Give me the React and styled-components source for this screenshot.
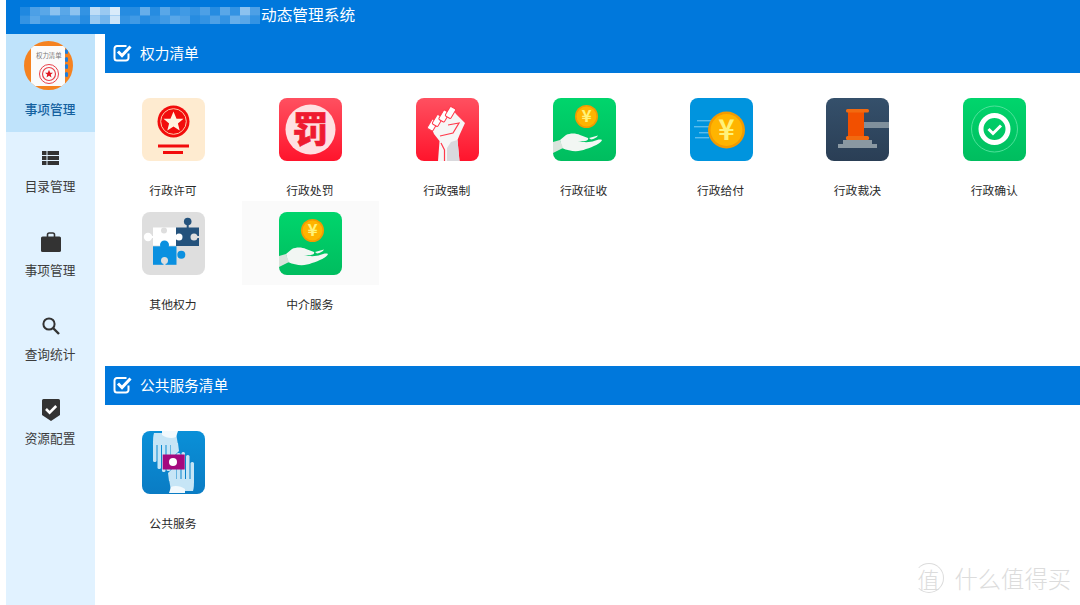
import React from "react";
import styled, { createGlobalStyle } from "styled-components";

const GlobalStyle = createGlobalStyle`
  html, body { margin: 0; padding: 0; height: 100%; background: #fff; overflow: hidden; }
  #root { height: 100%; }
  * { box-sizing: border-box; }
`;

const FONT = `"Noto Sans CJK SC", "Liberation Sans", sans-serif`;
const BLUE = "#0078dc";

const Page = styled.div`
  position: relative;
  display: flex;
  flex-direction: column;
  height: 605px;
  padding-left: 6px;
  font-family: ${FONT};
  overflow: hidden;
`;

const Header = styled.header`
  display: flex;
  align-items: flex-start;
  flex: none;
  height: 34px;
  padding: 5px 0 0 14px;
  background: ${BLUE};
  color: #fff;
`;

const HeaderTitle = styled.h1`
  margin: 0;
  font-size: 15.7px;
  font-weight: 400;
  line-height: 19px;
`;

const MosaicSvg = styled.svg`
  flex: none;
  margin-top: 2px;
  filter: blur(0.7px);
`;

const Body = styled.div`
  display: flex;
  flex: 1;
  min-height: 0;
`;

const Sidebar = styled.nav`
  flex: none;
  width: 89px;
  background: #e1f2ff;
`;

const NavItem = styled.div`
  display: flex;
  flex-direction: column;
  align-items: center;
  height: ${(p) => (p.$active ? "98px" : "84px")};
  padding-top: 7px;
  background: ${(p) => (p.$active ? "#bfe3fb" : "transparent")};
`;

const NavIcon = styled.div`
  display: flex;
  align-items: center;
  justify-content: center;
  height: ${(p) => (p.$active ? "49px" : "38px")};
  margin-right: ${(p) => (p.$active ? "4px" : "0")};
  margin-bottom: ${(p) => (p.$active ? "10px" : "0")};
`;

const NavLabel = styled.span`
  margin-right: 1px;
  font-size: 12.7px;
  line-height: 18px;
  font-weight: ${(p) => (p.$active ? 500 : 400)};
  color: ${(p) => (p.$active ? "#14619f" : "#3c3c3c")};
`;

const Main = styled.main`
  flex: 1;
  min-width: 0;
  margin-left: 10px;
`;

const SectionBar = styled.div`
  display: flex;
  align-items: center;
  gap: 8px;
  height: 39px;
  padding: 0 0 2px 8px;
  margin-top: ${(p) => p.$offset || 0}px;
  background: ${BLUE};
  color: #fff;
  font-size: 14.7px;
`;

const TileGrid = styled.div`
  display: grid;
  grid-template-columns: repeat(7, 136.9px);
  padding-top: ${(p) => p.$top}px;
`;

const Tile = styled.div`
  display: flex;
  flex-direction: column;
  align-items: center;
  height: 114px;
`;

const TileBox = styled.div`
  display: flex;
  justify-content: center;
  align-self: stretch;
  height: 84px;
  padding-top: 11px;
  background: ${(p) => (p.$hover ? "#fafafa" : "transparent")};
`;

const TileLabel = styled.span`
  margin: 10px 1px 0 0;
  font-size: 11.8px;
  line-height: 18px;
  color: #2a2a2a;
`;

const Watermark = styled.div`
  position: absolute;
  right: 9px;
  bottom: 12px;
  display: flex;
  align-items: center;
  gap: 11px;
  color: #dcdcdc;
  font-size: 23.3px;
  font-weight: 300;
  line-height: 30px;
`;

const WatermarkSeal = styled.span`
  display: flex;
  align-items: center;
  justify-content: center;
  width: 30px;
  height: 30px;
  border: 1.5px solid #dcdcdc;
  border-left-color: transparent;
  border-radius: 50%;
  font-size: 22px;
`;

const mosaicRows = [
  [.12, .3, .35, .55, .35, .55, .2, .75, .6, .85, .15, .15, .4, .15, .35, .2, .25, .2, .3, .15, .35, .2, .55, .3],
  [.2, .35, .25, .25, .3, .3, .15, .6, .45, .8, .2, .25, .15, .2, .25, .35, .3, .15, .2, .3, .2, .4, .35, .2],
];

function Mosaic() {
  return (
    <MosaicSvg width="241" height="17">
      {mosaicRows.map((row, y) =>
        row.map((a, x) => (
          <rect key={`${y}-${x}`} x={x * 10} y={y * 8.5} width="10" height="8.5" fill="#fff" opacity={a} />
        ))
      )}
    </MosaicSvg>
  );
}

const STAR = "M0 -10 L2.9 -3.1 L9.5 -3.1 L4.2 1.4 L5.9 8.1 L0 4.3 L-5.9 8.1 L-4.2 1.4 L-9.5 -3.1 L-2.9 -3.1 Z";

function LogoIcon() {
  return (
    <svg width="49" height="49" viewBox="0 0 49 49">
      <defs>
        <clipPath id="logoClip"><circle cx="24.5" cy="24.5" r="24.5" /></clipPath>
      </defs>
      <circle cx="24.5" cy="24.5" r="24.5" fill="#f58220" />
      <g clipPath="url(#logoClip)">
        <rect x="7" y="5" width="34" height="40" fill="#fbfbfb" />
        <g fill="#1c7ee0">
          <rect x="41" y="8" width="3" height="5" rx="1.5" />
          <rect x="41" y="16" width="3" height="5" rx="1.5" />
          <rect x="41" y="23" width="3" height="5" rx="1.5" />
          <rect x="41" y="31" width="3" height="5" rx="1.5" />
        </g>
        <text x="12" y="17" fontSize="6.4" fill="#777" fontFamily={FONT}>权力清单</text>
        <circle cx="25" cy="33" r="9.5" fill="none" stroke="#e8404a" strokeWidth="1" />
        <circle cx="25" cy="33" r="6.5" fill="none" stroke="#e8404a" strokeWidth="1.2" />
        <path d={STAR} transform="translate(25 33) scale(.42)" fill="#e01822" />
      </g>
    </svg>
  );
}

function ListIcon() {
  return (
    <svg width="17" height="14" viewBox="0 0 17 14" fill="#333">
      <rect x="0" y="0" width="4.5" height="4" />
      <rect x="5.5" y="0" width="11.5" height="4" />
      <rect x="0" y="5" width="4.5" height="4" />
      <rect x="5.5" y="5" width="11.5" height="4" />
      <rect x="0" y="10" width="4.5" height="4" />
      <rect x="5.5" y="10" width="11.5" height="4" />
    </svg>
  );
}

function CaseIcon() {
  return (
    <svg width="20" height="20" viewBox="0 0 20 20">
      <path d="M6.5 5V2.8C6.5 1.8 7.2 1 8.2 1h3.6c1 0 1.7.8 1.7 1.8V5" fill="none" stroke="#333" strokeWidth="1.6" />
      <rect x="0" y="4.5" width="20" height="15.5" rx="1.6" fill="#333" />
    </svg>
  );
}

function SearchIcon() {
  return (
    <svg width="18" height="18" viewBox="0 0 18 18" fill="none" stroke="#333">
      <circle cx="7" cy="7" r="5.6" strokeWidth="2" />
      <path d="M11 11l6 6" strokeWidth="2.4" />
    </svg>
  );
}

function ShieldIcon() {
  return (
    <svg width="18" height="22" viewBox="0 0 18 22">
      <path d="M1.5 0h15A1.5 1.5 0 0 1 18 1.5V16l-9 6-9-6V1.5A1.5 1.5 0 0 1 1.5 0z" fill="#333" />
      <path d="M4 10l3.6 3.6L14.2 7" fill="none" stroke="#fff" strokeWidth="2.6" />
    </svg>
  );
}

function CheckSquare() {
  return (
    <svg width="19" height="19" viewBox="0 0 19 19" fill="none" stroke="#fff">
      <path d="M15.5 10.5V15a2.5 2.5 0 0 1-2.5 2.5H4A2.5 2.5 0 0 1 1.5 15V5.5A2.5 2.5 0 0 1 4 3h9.5" strokeWidth="2" />
      <path d="M5 8.5l4 4 8.5-9" strokeWidth="3" />
    </svg>
  );
}

// 63 x 63 application tile
function IconFrame({ name, from, to, children }) {
  return (
    <svg width="63" height="63" viewBox="0 0 63 63">
      <defs>
        <linearGradient id={`${name}Bg`} x1="0" y1="0" x2="0" y2="1">
          <stop offset="0" stopColor={from} />
          <stop offset="1" stopColor={to} />
        </linearGradient>
        <clipPath id={`${name}Clip`}><rect width="63" height="63" rx="8" /></clipPath>
      </defs>
      <g clipPath={`url(#${name}Clip)`}>
        <rect width="63" height="63" fill={`url(#${name}Bg)`} />
        {children}
      </g>
    </svg>
  );
}

function Coin({ cx, cy, r }) {
  return (
    <g>
      <circle cx={cx} cy={cy} r={r} fill="#f39a00" />
      <circle cx={cx} cy={cy} r={r * 0.86} fill="#ffb400" />
      <text x={cx} y={cy + r * 0.52} fontSize={r * 1.5} fontWeight="700" textAnchor="middle" fill="#fff27a" fontFamily={FONT}>¥</text>
    </g>
  );
}

function PermitIcon() {
  return (
    <IconFrame name="permit" from="#feebd0" to="#feebd0">
      <circle cx="31.5" cy="23.5" r="16" fill="#f20c0c" />
      <circle cx="31.5" cy="23.5" r="12.8" fill="none" stroke="#ffc8a8" strokeWidth="1" />
      <path d={STAR} transform="translate(31.5 24) scale(1.05)" fill="#fff3e0" />
      <rect x="16" y="46.5" width="31" height="3" fill="#f20c0c" />
      <rect x="21" y="53" width="20" height="3" fill="#f20c0c" />
    </IconFrame>
  );
}

function PenaltyIcon() {
  return (
    <IconFrame name="penalty" from="#ff5060" to="#ff142c">
      <circle cx="31.5" cy="31.5" r="25" fill="#ffe0e2" />
      <text x="31.5" y="44.5" fontSize="36" fontWeight="900" textAnchor="middle" fill="#ef1a30" stroke="#ef1a30" strokeWidth=".6" fontFamily={FONT}>罚</text>
    </IconFrame>
  );
}

function FistIcon() {
  return (
    <IconFrame name="fist" from="#ff5060" to="#ff142c">
      <path d="M22 63 L23.5 43 L18 36 L14 26 L36 10 L40 16 L49 25 L43.5 37 L41.5 42 L43.5 63 Z" fill="#f6f6f6" />
      <path d="M31 63 L31 50 L35 44 L41.5 42 L43.5 63 Z" fill="#d9d9dd" />
      <g fill="#fff" stroke="#ff3a4c" strokeWidth="1">
        <rect x="13.25" y="21.5" width="6.5" height="11" rx="1.2" transform="rotate(30 16.5 27)" />
        <rect x="18.25" y="17" width="6.5" height="11" rx="1.2" transform="rotate(30 21.5 22.5)" />
        <rect x="24.75" y="12.5" width="6.5" height="11" rx="1.2" transform="rotate(30 28 18)" />
        <rect x="31.25" y="9" width="6.5" height="11" rx="1.2" transform="rotate(30 34.5 14.5)" />
      </g>
      <path d="M32 27 L43 25 L37 35 L24 38" fill="none" stroke="#ff3a4c" strokeWidth="1.2" />
      <path d="M25 45 L28.5 52 L28.5 63" fill="none" stroke="#ff3a4c" strokeWidth="1.2" />
    </IconFrame>
  );
}

function CollectIcon({ name }) {
  return (
    <IconFrame name={name} from="#00d56c" to="#00bd5f">
      <Coin cx={33.5} cy={18.5} r={11.5} />
      <path d="M7 42 L13 37 C17 35 23 35 27 37 L35 40 C36 42 33 44 25 43 C32 45 38 44 41 43 C44 42 47 41 49 42 C48 45 40 49 33 51 C26 54 18 54 9 50 Z" fill="#f2f6f3" />
      <path d="M36 40 L45 37.5 C44 39.5 41 41 38 41.5 Z" fill="#f2f6f3" />
      <path d="M0 44 L7 42 L10 50 L0 55 Z" fill="#d9e4dc" />
    </IconFrame>
  );
}

function PayIcon() {
  return (
    <IconFrame name="pay" from="#0094de" to="#0094de">
      <g fill="#5cbcec">
        <rect x="7" y="22" width="14" height="1.4" />
        <rect x="4" y="28" width="17" height="1.4" />
        <rect x="9" y="34" width="11" height="1.4" />
        <rect x="5" y="39" width="14" height="1.4" />
      </g>
      <Coin cx={36.5} cy={32} r={18.5} />
    </IconFrame>
  );
}

function GavelIcon() {
  return (
    <IconFrame name="gavel" from="#35506b" to="#2a3e55">
      <rect x="37" y="24" width="26" height="6" fill="#80909c" />
      <rect x="22" y="11" width="16" height="33" fill="#f25000" />
      <rect x="20" y="11" width="23" height="3.5" rx="1.5" fill="#f26a10" />
      <rect x="20" y="38" width="23" height="4" rx="1.5" fill="#f26a10" />
      <rect x="17" y="42" width="29" height="4" fill="#8a98a2" />
      <rect x="12" y="46" width="39" height="4" fill="#8a98a2" />
    </IconFrame>
  );
}

function ConfirmIcon() {
  return (
    <IconFrame name="confirm" from="#00d56c" to="#00bd5f">
      <circle cx="31.5" cy="31" r="23" fill="none" stroke="#4fe09a" strokeWidth="1" />
      <circle cx="31.5" cy="31" r="13.5" fill="none" stroke="#fff" strokeWidth="5" />
      <path d="M25.5 31l4.5 4.5 8-8" fill="none" stroke="#fff" strokeWidth="3" />
    </IconFrame>
  );
}

function PuzzleIcon() {
  return (
    <IconFrame name="puzzle" from="#dedede" to="#dedede">
      <rect x="11" y="15.5" width="23" height="18" fill="#fff" />
      <circle cx="6" cy="25" r="4.2" fill="#fff" />
      <rect x="9" y="24" width="3" height="2" fill="#fff" />
      <circle cx="22" cy="18.5" r="3" fill="#dedede" />
      <rect x="34" y="15.5" width="23" height="18.5" fill="#24527c" />
      <circle cx="45.7" cy="9.5" r="3.8" fill="#24527c" />
      <rect x="44.7" y="12" width="2" height="4" fill="#24527c" />
      <circle cx="37" cy="25" r="3.5" fill="#fff" />
      <circle cx="52" cy="25" r="3.5" fill="#dedede" />
      <rect x="52" y="24" width="5" height="2" fill="#dedede" />
      <rect x="11" y="34.3" width="23.5" height="18.5" fill="#0a90e0" />
      <circle cx="22.5" cy="33" r="4.5" fill="#0a90e0" />
      <circle cx="39.3" cy="42.7" r="4" fill="#0a90e0" />
      <circle cx="22.5" cy="48.5" r="3.5" fill="#dedede" />
      <rect x="21.5" y="49" width="2" height="4" fill="#dedede" />
    </IconFrame>
  );
}

function ServiceHand({ flip }) {
  return (
    <g transform={flip ? "rotate(180 31.5 31)" : undefined} fill="#c6e5f6">
      <path d="M11 14 C11 9 11 5 12 2 L34 2 L36 14 Z" />
      <path d="M29 12 L36 12 L37 20 L32 25 L29 25 Z" />
      <path d="M20 0 H36 L34 6 C30 8 24 7 20 4 Z" fill="#f2f9fd" />
      <rect x="11" y="12" width="3.5" height="19" rx="1.5" />
      <rect x="15.5" y="12" width="3.5" height="26" rx="1.5" />
      <rect x="20" y="12" width="3.5" height="29" rx="1.5" />
      <rect x="24.5" y="12" width="4" height="28" rx="1.5" />
    </g>
  );
}

function ServiceIcon() {
  return (
    <IconFrame name="service" from="#0a90d8" to="#0a7cc4">
      <ServiceHand />
      <ServiceHand flip />
      <rect x="20.7" y="23.5" width="22" height="15" fill="#a5087e" />
      <circle cx="31" cy="31" r="4" fill="#fff" />
    </IconFrame>
  );
}

const navItems = [
  { label: "目录管理", icon: <ListIcon /> },
  { label: "事项管理", icon: <CaseIcon /> },
  { label: "查询统计", icon: <SearchIcon /> },
  { label: "资源配置", icon: <ShieldIcon /> },
];

const powerTiles = [
  { label: "行政许可", icon: <PermitIcon /> },
  { label: "行政处罚", icon: <PenaltyIcon /> },
  { label: "行政强制", icon: <FistIcon /> },
  { label: "行政征收", icon: <CollectIcon name="collect" /> },
  { label: "行政给付", icon: <PayIcon /> },
  { label: "行政裁决", icon: <GavelIcon /> },
  { label: "行政确认", icon: <ConfirmIcon /> },
  { label: "其他权力", icon: <PuzzleIcon /> },
  { label: "中介服务", icon: <CollectIcon name="agency" />, hover: true },
];

export default function App() {
  return (
    <Page>
      <GlobalStyle />
      <Header>
        <Mosaic />
        <HeaderTitle>动态管理系统</HeaderTitle>
      </Header>
      <Body>
        <Sidebar>
          <NavItem $active>
            <NavIcon $active><LogoIcon /></NavIcon>
            <NavLabel $active>事项管理</NavLabel>
          </NavItem>
          {navItems.map((item) => (
            <NavItem key={item.label}>
              <NavIcon>{item.icon}</NavIcon>
              <NavLabel>{item.label}</NavLabel>
            </NavItem>
          ))}
        </Sidebar>
        <Main>
          <SectionBar>
            <CheckSquare />
            权力清单
          </SectionBar>
          <TileGrid $top={14}>
            {powerTiles.map((t) => (
              <Tile key={t.label}>
                <TileBox $hover={t.hover}>{t.icon}</TileBox>
                <TileLabel>{t.label}</TileLabel>
              </Tile>
            ))}
          </TileGrid>
          <SectionBar $offset={51}>
            <CheckSquare />
            公共服务清单
          </SectionBar>
          <TileGrid $top={15}>
            <Tile>
              <TileBox><ServiceIcon /></TileBox>
              <TileLabel>公共服务</TileLabel>
            </Tile>
          </TileGrid>
        </Main>
      </Body>
      <Watermark>
        <WatermarkSeal>值</WatermarkSeal>
        什么值得买
      </Watermark>
    </Page>
  );
}
